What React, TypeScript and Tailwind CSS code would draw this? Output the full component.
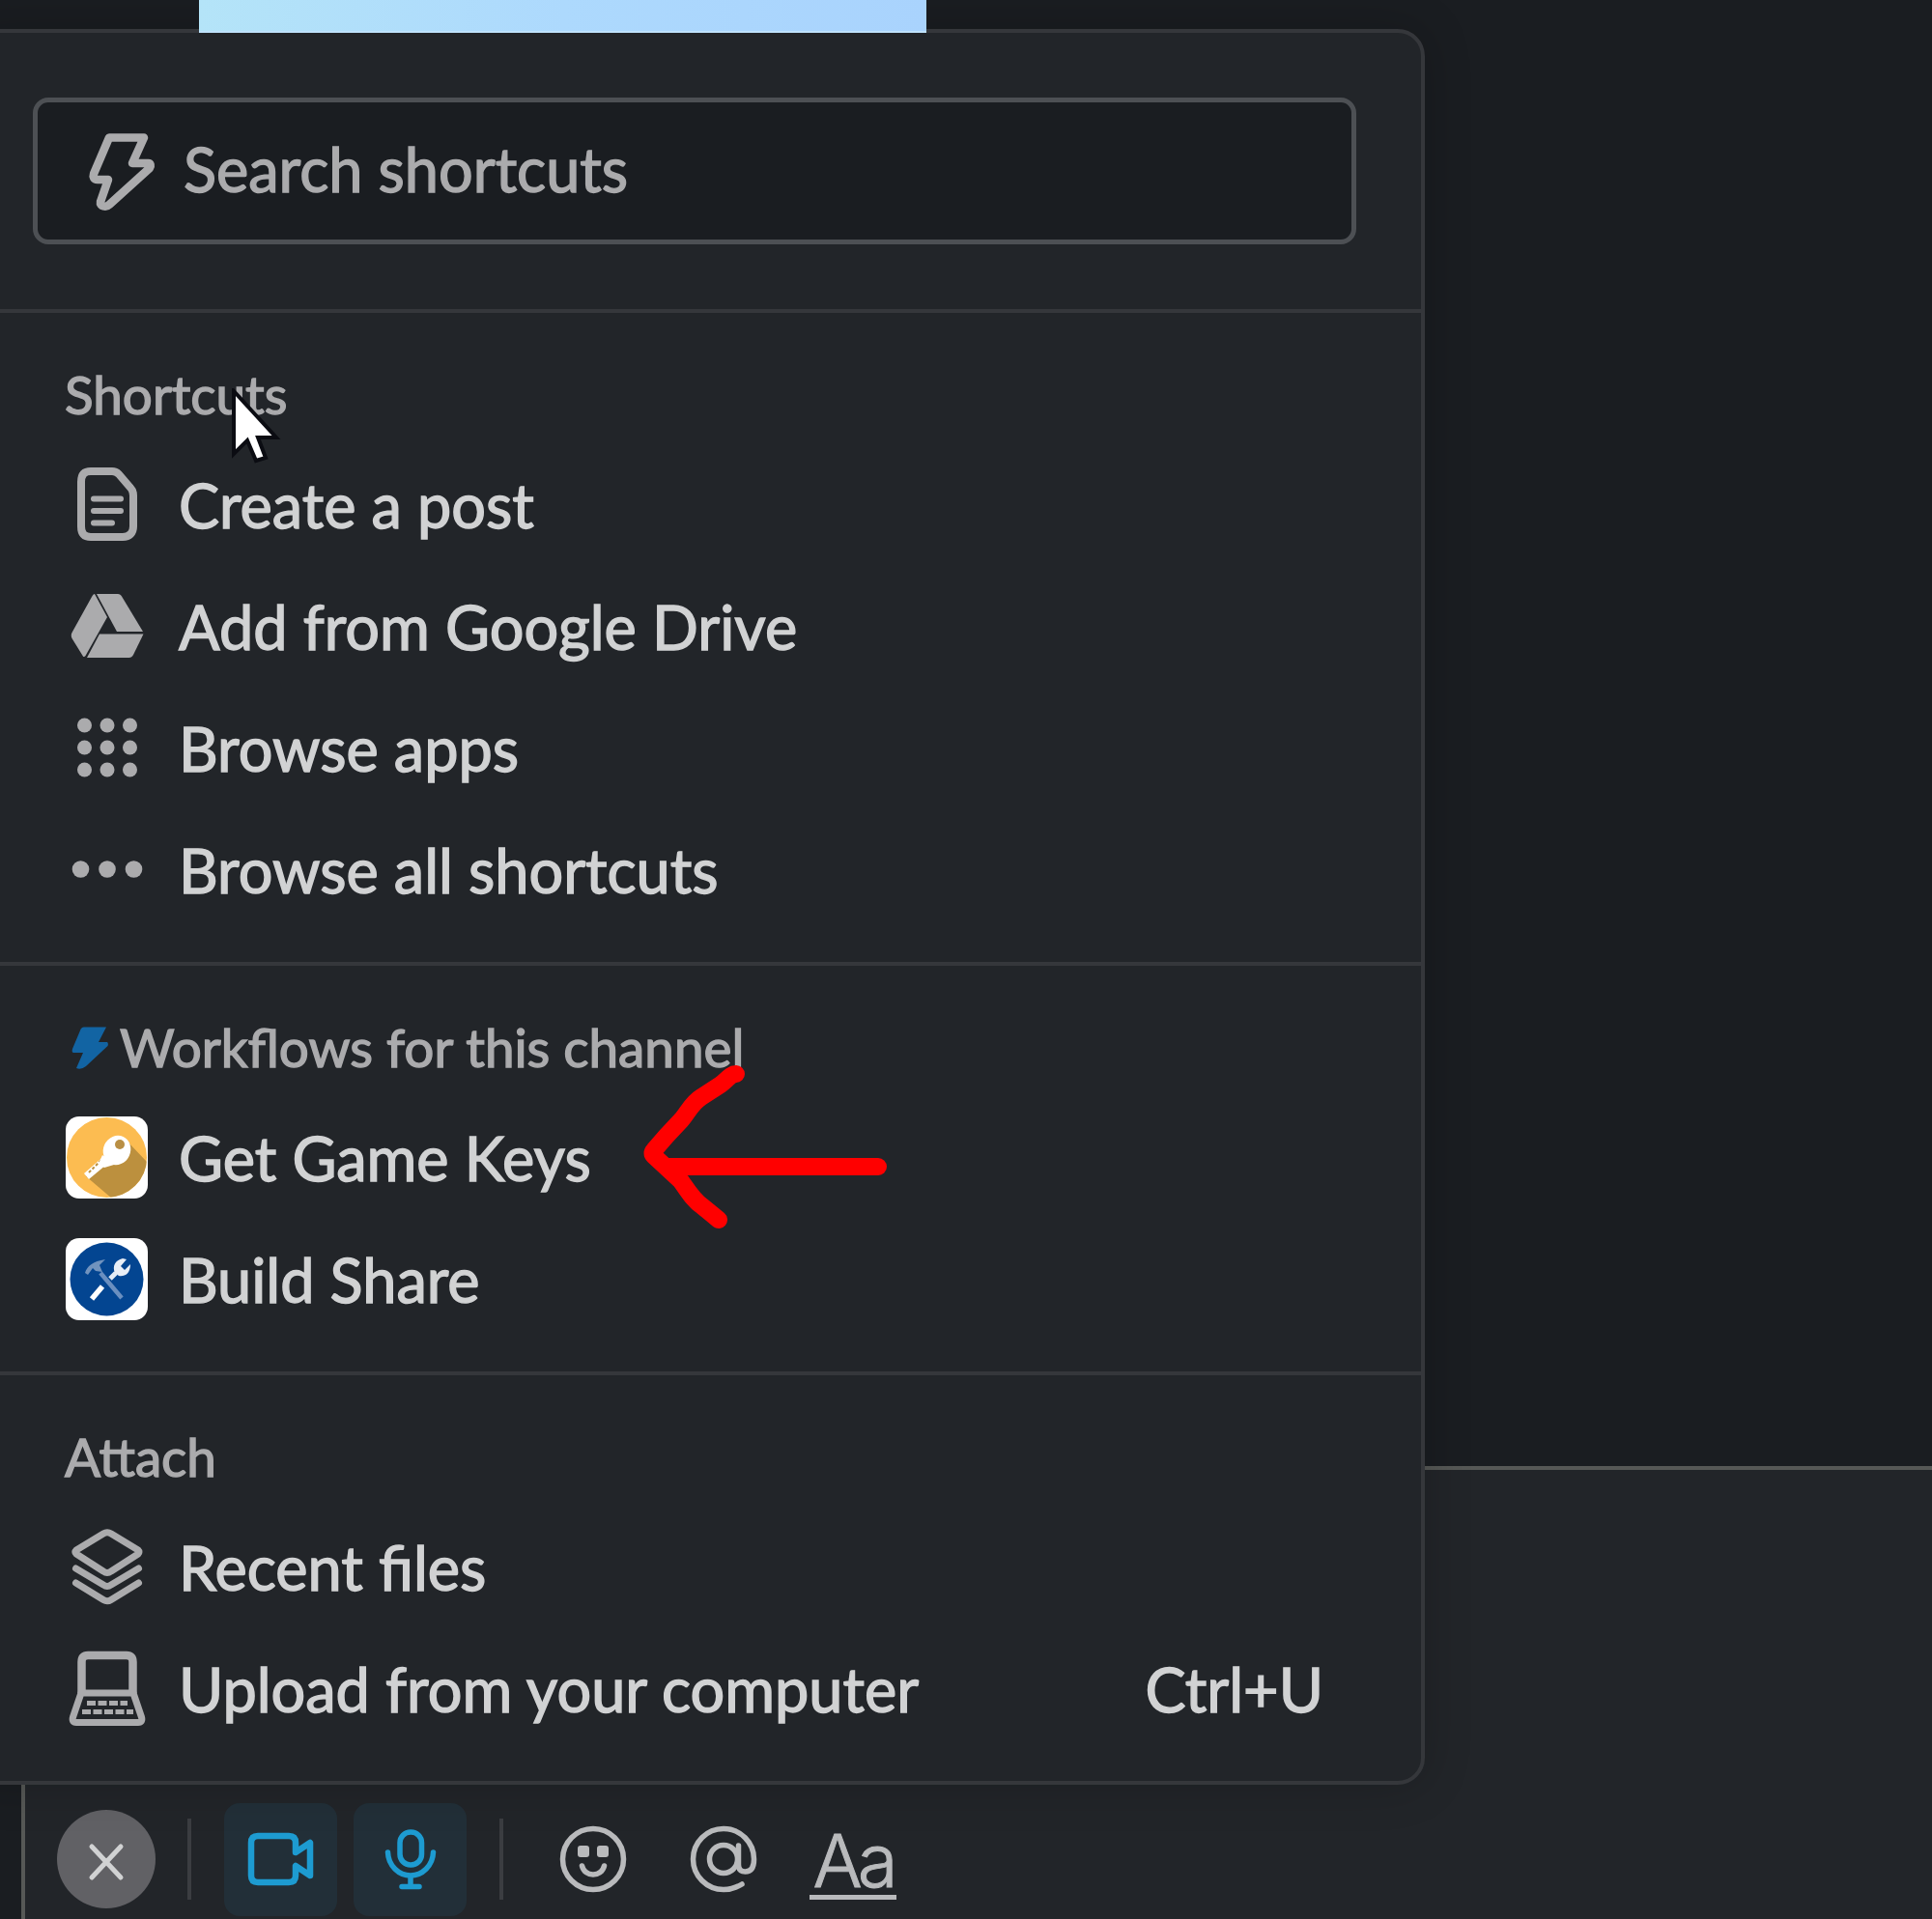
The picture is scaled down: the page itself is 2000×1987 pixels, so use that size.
import type { ReactNode } from "react";

const ICON = "#ababad";

function BoltOutline() {
  return (
    <svg className="mt-[2px] h-[84px] w-[70px] shrink-0" viewBox="0 0 70 84" fill="none" stroke={ICON} strokeWidth="8.500" strokeLinejoin="round">
      <path d="M22 6.500H58L46 33H62.500C65 33 65.500 36 64 38L22 76C19 79 12 78 13 73L21 50H10C6 50 5 47 6 44Z" />
    </svg>
  );
}

function PostIcon() {
  return (
    <svg className="h-[78px] w-[66px]" viewBox="0 0 66 78" fill="none" stroke={ICON} strokeWidth="8" strokeLinejoin="round">
      <path d="M16 5H38C41 5 43 6 45 8L57 22C59 24 60 27 60 30V62C60 69 56 73 49 73H16C9 73 6 69 6 62V16C6 9 9 5 16 5Z" />
      <path d="M19 33.500H47M19 46H47M19 58.500H38" strokeWidth="6" strokeLinecap="round" />
    </svg>
  );
}

function DriveIcon() {
  return (
    <svg className="h-[68px] w-[76px]" viewBox="0 0 76 68" fill={ICON}>
      <path d="M25 1L38 25L15.500 65C14 67 13 66 12 64L1.500 47C0.500 45 0.500 43 1.500 41L22 4C23 2 24 1 25 1Z" />
      <path d="M27 1H49C51 1 52 2 53 3.500L75 40H48Z" />
      <path d="M30 42.500H75.500L65 64C64 66 62.500 67 60.500 67H17Z" />
    </svg>
  );
}

function GridIcon() {
  return (
    <svg className="h-[64px] w-[64px]" viewBox="0 0 64 64" fill={ICON}>
      {[9, 32, 55].map((y) => [8.5, 32, 55.5].map((x) => <circle key={`${x}-${y}`} cx={x} cy={y} r="7.500" />))}
    </svg>
  );
}

function DotsIcon() {
  return (
    <svg className="h-[20px] w-[76px]" viewBox="0 0 76 20" fill={ICON}>
      <circle cx="10.500" cy="10" r="8.800" />
      <circle cx="38" cy="10" r="8.800" />
      <circle cx="65.500" cy="10" r="8.800" />
    </svg>
  );
}

function KeyIcon() {
  return (
    <svg className="h-[85px] w-[85px] rounded-[14px]" viewBox="0 0 85 85">
      <rect width="85" height="85" fill="#fff" />
      <clipPath id="key-disc">
        <circle cx="42.500" cy="42.500" r="41.500" />
      </clipPath>
      <circle cx="42.500" cy="42.500" r="41.500" fill="#fcbc51" />
      <path clipPath="url(#key-disc)" d="M64 26L85 48V85H48L21 62L45 43Z" fill="#bc903e" />
      <path d="M41 40L19 59L24 65L30 60L42 50Z" fill="#fff" />
      <path d="M24 58L39 43" stroke="#bc903e" strokeWidth="2" strokeDasharray="3 2" />
      <ellipse cx="53" cy="35" rx="14" ry="15.500" fill="#fff" transform="rotate(25 53 35)" />
      <path d="M38 40L50 50L40 53L34 49Z" fill="#fff" />
      <circle cx="56" cy="29" r="5" fill="#b98f45" />
    </svg>
  );
}

function ToolsIcon() {
  return (
    <svg className="h-[85px] w-[85px] rounded-[14px]" viewBox="0 0 85 85" fill="none">
      <rect width="85" height="85" fill="#fff" />
      <circle cx="42.500" cy="42.500" r="38" fill="#034591" />
      <path d="M36 36L58 62" stroke="#6a8fc0" strokeWidth="4.500" />
      <path d="M20 36C22 29 28 24 41 22L35 28L38 35L31 34L28 31L23 38Z" fill="#7193be" />
      <path d="M27 63L38 50" stroke="#fff" strokeWidth="5.500" />
      <path d="M46 42L52 36" stroke="#e4ecf5" strokeWidth="5" />
      <path d="M59 21C51 23 48 29 51 36L55 39C61 40 67 37 67 27L61 33L57 29L63 22Z" fill="#e8eef6" />
    </svg>
  );
}

function LayersIcon() {
  return (
    <svg className="h-[80px] w-[76px]" viewBox="0 0 76 80" fill="none" stroke={ICON} strokeWidth="7" strokeLinejoin="round" strokeLinecap="round">
      <path d="M34 6Q38 3.500 42 6L70 23Q72 25 70 27L42 45Q38 48 34 45L6 27Q4 25 6 23Z" />
      <path d="M5.500 42L34 59Q38 62 42 59L70.500 42" />
      <path d="M5.500 57L34 74.500Q38 77 42 74.500L70.500 57" />
    </svg>
  );
}

function LaptopIcon() {
  return (
    <svg className="h-[80px] w-[80px]" viewBox="0 0 80 80" fill="none" stroke={ICON} strokeWidth="8.500" strokeLinejoin="round">
      <path d="M13.500 45V13Q13.500 6 20 6H60Q66.500 6 66.500 13V45" />
      <path d="M13 45H67L75.500 70Q77 75.500 72 75.500H8Q3 75.500 4.500 70Z" strokeWidth="7" />
      <path d="M19 55.500H61M14 64.500H67" strokeWidth="5" strokeDasharray="9 2.500" />
    </svg>
  );
}

function SmallBolt() {
  return (
    <svg className="ml-[7px] h-[44px] w-[39px] shrink-0" viewBox="0 0 39 44" fill="#1264a3">
      <path d="M13 0.500H36L28 16H37Q38.500 17.500 37.500 20L15 41Q10 45 5 43L12 27H2Q0 27 1 23L9 4Q10 0.500 13 0.500Z" />
    </svg>
  );
}

function Row({ icon, label, hint }: { icon: ReactNode; label: ReactNode; hint?: ReactNode }) {
  return (
    <div className="flex h-[126px] items-center pr-[101px]">
      <div className="flex w-[87px] shrink-0 justify-center">{icon}</div>
      <div className="ml-[31px] flex-1 whitespace-nowrap pt-[2px] text-[63px] leading-[76px] text-[#d1d2d3]">{label}</div>
      {hint && <div className="whitespace-nowrap pt-[2px] text-[63px] leading-[76px] text-[#d1d2d3]">{hint}</div>}
    </div>
  );
}

function Section({ title, children }: { title: ReactNode; children: ReactNode }) {
  return (
    <section className="border-t-4 border-[#35373b] pb-[33px] pl-[103px]">
      <h2 className="flex h-[135px] items-center whitespace-nowrap pt-[34px] text-[54.8px] font-normal text-[#ababad]">{title}</h2>
      {children}
    </section>
  );
}

function ShortcutsMenu() {
  return (
    <div className="absolute -left-[40px] top-[30px] w-[1515px] rounded-[28px] border-4 border-[#35373b] bg-[#222529] shadow-[0_0_50px_rgba(0,0,0,0.2)] [-webkit-text-stroke:1.4px_currentColor]">
      <div className="pb-[67px] pl-[70px] pr-[67px] pt-[67px]">
        <div className="flex h-[152px] items-center rounded-[16px] border-[5px] border-[#4d5054] bg-[#1a1d21] pl-[52px]">
          <BoltOutline />
          <span className="-mt-[5px] ml-[29px] whitespace-nowrap text-[63px] leading-[76px] text-[#ababad]">Search shortcuts</span>
        </div>
      </div>
      <Section title="Shortcuts">
        <Row icon={<PostIcon />} label="Create a post" />
        <Row icon={<DriveIcon />} label="Add from Google Drive" />
        <Row icon={<GridIcon />} label="Browse apps" />
        <Row icon={<DotsIcon />} label="Browse all shortcuts" />
      </Section>
      <Section
        title={
          <>
            <SmallBolt />
            <span className="ml-[11px]">Workflows for this channel</span>
          </>
        }
      >
        <Row icon={<KeyIcon />} label="Get Game Keys" />
        <Row icon={<ToolsIcon />} label="Build Share" />
      </Section>
      <Section title="Attach">
        <Row icon={<LayersIcon />} label="Recent files" />
        <Row icon={<LaptopIcon />} label="Upload from your computer" hint="Ctrl+U" />
      </Section>
    </div>
  );
}

function Toolbar() {
  return (
    <div className="flex h-[124px] items-center pl-[33px]">
      <div className="flex h-[102px] w-[102px] items-center justify-center rounded-full bg-[#616165]">
        <svg className="mt-[5px] h-[40px] w-[40px]" viewBox="0 0 40 40" stroke="#d1d2d3" strokeWidth="5" strokeLinecap="round">
          <path d="M5 4L35 36M35 4L5 36" />
        </svg>
      </div>
      <div className="ml-[33px] h-[84px] w-[4px] bg-[#3b3d41]" />
      <div className="ml-[34px] flex h-[117px] w-[117px] items-center justify-center rounded-[16px] bg-[#222f38]">
        <svg className="h-[60px] w-[70px]" viewBox="0 0 70 60" fill="none" stroke="#1d9bd1" strokeWidth="6.500" strokeLinejoin="round">
          <path d="M11 6H43Q50 6 50 13V23L65 13V47L50 37V47Q50 54 43 54H11Q4 54 4 47V13Q4 6 11 6Z" />
        </svg>
      </div>
      <div className="ml-[17px] flex h-[117px] w-[117px] items-center justify-center rounded-[16px] bg-[#222f38]">
        <svg className="h-[64px] w-[54px]" viewBox="0 0 54 64" fill="none" stroke="#1d9bd1" strokeWidth="5.500" strokeLinecap="round">
          <rect x="16" y="4" width="22.500" height="34" rx="11" />
          <path d="M3.500 25C4 39 15 49 27 49C39 49 50 39 50.500 25M27 50V60M18 60.500H36" />
        </svg>
      </div>
      <div className="ml-[34px] h-[84px] w-[4px] bg-[#3b3d41]" />
      <svg className="ml-[58px] h-[70px] w-[70px]" viewBox="0 0 70 70" fill="none" stroke="#b9babc" strokeWidth="5.500">
        <circle cx="35" cy="35" r="31.500" />
        <path d="M23.500 42C25 48 30 51 35 51C40 51 45 48 46.500 42" strokeLinecap="round" />
        <rect x="19" y="21" width="12" height="12" rx="3" fill="#b9babc" stroke="none" />
        <rect x="39" y="21" width="12" height="12" rx="3" fill="#b9babc" stroke="none" />
      </svg>
      <svg className="ml-[65px] h-[70px] w-[70px]" viewBox="0 0 70 70" fill="none" stroke="#b9babc" strokeWidth="5.500" strokeLinecap="round">
        <circle cx="35" cy="35" r="14.500" />
        <path d="M50.500 21V41Q50.500 48 57.500 48Q66.500 48 66.500 35A31.500 31.500 0 1 0 35 66.500Q45 66.500 54 61" />
      </svg>
      <div className="ml-[54px] flex h-[84px] w-[90px] flex-col items-center justify-end border-b-[5px] border-[#b9babc] font-['Inter'] text-[76px] font-light leading-[72px] tracking-[-5px] text-[#b9babc] [-webkit-text-stroke:1px_currentColor]">
        Aa
      </div>
    </div>
  );
}

function Cursor() {
  return (
    <svg className="absolute left-[239px] top-[402px] h-[80px] w-[54px]" viewBox="0 0 54 80" fill="#fff" stroke="#0b0c12" strokeWidth="4">
      <path d="M3 3V68L17 54L26 75L36 72L28 51H47Z" />
    </svg>
  );
}

function RedArrow() {
  return (
    <svg
      className="absolute left-[660px] top-[1096px] h-[184px] w-[268px]"
      viewBox="0 0 268 184"
      fill="none"
      stroke="#ff0000"
      strokeWidth="18"
      strokeLinecap="round"
      strokeLinejoin="round"
    >
      <path d="M102 16C96 16 92 23 86 27L66 40C56 46 52 56 45 64L30 80L17 95Q14 98 17 101L45 127C52 137 58 147 67 153L78 162L84 167" />
      <path d="M30 112H249" />
    </svg>
  );
}

export default function App() {
  return (
    <div className="relative h-[1987px] w-[2000px] overflow-hidden bg-[#1a1d21] font-['Lato',sans-serif]">
      <div className="flex h-full flex-col">
        <div className="h-[1518px] shrink-0 pl-[206px]">
          <div className="relative z-10 h-[34px] w-[753px] border-b-2 border-[#bfe2fb] bg-linear-to-r from-[#b4e4f8] via-[#add9fd] to-[#a9d3fd]" />
        </div>
        <div className="ml-[22px] flex flex-1 flex-col justify-end border-l-4 border-t-4 border-[#565856] bg-[#222529]">
          <Toolbar />
        </div>
      </div>
      <ShortcutsMenu />
      <RedArrow />
      <Cursor />
    </div>
  );
}
